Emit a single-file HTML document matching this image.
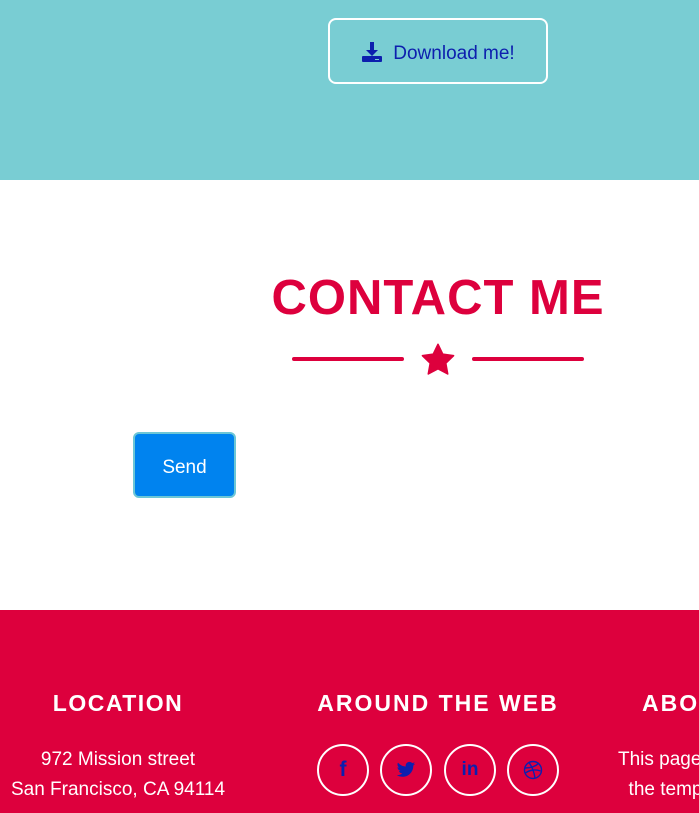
<!DOCTYPE html>
<html><head><meta charset="utf-8"><style>
*{margin:0;padding:0;box-sizing:border-box}
html,body{width:699px;height:813px;overflow:hidden}
body{position:relative;font-family:"Liberation Sans",sans-serif;background:#fff}
.wrap{position:absolute;left:0;top:0;width:699px;height:813px;overflow:hidden}
.a{position:absolute}
.top{left:0;top:0;width:699px;height:180px;background:#79cdd3}
.dl{left:328px;top:18px;width:220px;height:66px;border:2px solid #fff;border-radius:8px;color:#0d1fae;font-size:19px;display:flex;align-items:center;justify-content:center;gap:10px;padding-top:5px}
.h{left:238px;width:400px;text-align:center;color:#dd003d;font-weight:bold;font-size:49px;top:270px;letter-spacing:1px;white-space:nowrap}
.line{height:4px;background:#dd003d;border-radius:2px;top:357px;width:112px}
.send{left:133px;top:432px;width:103px;height:66px;background:#0083ef;border:2px solid #6cc6d6;border-radius:6px;color:#fff;font-size:19px;display:flex;align-items:center;justify-content:center;padding-top:5px}
.foot{left:0;top:610px;width:699px;height:203px;background:#dd003d;overflow:hidden}
.fh{color:#fff;font-weight:bold;font-size:23px;text-align:center;top:80px;white-space:nowrap}
.ft{color:#fff;font-size:19px;line-height:30px;text-align:center;white-space:nowrap}
.c{top:134px;width:52px;height:52px;border:2px solid #fff;border-radius:50%;display:flex;align-items:center;justify-content:center;color:#0d1fae;font-weight:bold;font-size:21px}
</style></head><body><div class="wrap">
<div class="a top"></div>
<div class="a dl"><svg width="22" height="22" viewBox="0 0 22 22" style="margin-top:-4px"><path d="M9 1h4v8h4l-6 6-6-6h4z" fill="#0d1fae"/><rect x="1" y="15" width="20" height="6" rx="1" fill="#0d1fae"/><rect x="14" y="18" width="4" height="1" fill="#79cdd3"/></svg><span>Download me!</span></div>
<div class="a h">CONTACT ME</div>
<div class="a line" style="left:292px"></div>
<div class="a line" style="left:472px"></div>
<svg class="a" style="left:420px;top:342px" width="36" height="36" viewBox="0 0 24 24"><path d="M12 1.5l3.2 6.6 7.2 1-5.2 5 1.3 7.2L12 17.9l-6.5 3.4 1.3-7.2-5.2-5 7.2-1z" fill="#dd003d" stroke="#dd003d" stroke-linejoin="round" stroke-width="1"/></svg>
<div class="a send">Send</div>
<div class="a foot">
<div class="a fh" style="left:0;width:236px;letter-spacing:1.5px">LOCATION</div>
<div class="a ft" style="left:0;width:236px;top:135px">972 Mission street<br>San Francisco, CA 94114</div>
<div class="a fh" style="left:288px;width:300px;letter-spacing:2px">AROUND THE WEB</div>
<div class="a c" style="left:317px">f</div>
<div class="a c" style="left:380px"><svg width="20" height="18" viewBox="0 0 24 20"><path d="M23 2.5c-.8.4-1.7.6-2.6.7.9-.6 1.6-1.4 2-2.5-.9.5-1.9.9-2.9 1.1C18.6.9 17.4.3 16.1.3c-2.5 0-4.5 2-4.5 4.5 0 .4 0 .7.1 1C7.9 5.6 4.6 3.8 2.4 1.1 2 1.8 1.8 2.6 1.8 3.4c0 1.6.8 2.9 2 3.7-.7 0-1.4-.2-2-.6v.1c0 2.2 1.6 4 3.6 4.4-.4.1-.8.2-1.2.2-.3 0-.6 0-.8-.1.6 1.8 2.2 3.1 4.2 3.1-1.5 1.2-3.5 1.9-5.6 1.9H1c2 1.3 4.4 2 6.9 2 8.3 0 12.8-6.9 12.8-12.8v-.6c.9-.6 1.6-1.4 2.3-2.2z" fill="#0d1fae"/></svg></div>
<div class="a c" style="left:444px;font-size:19px">in</div>
<div class="a c" style="left:507px"><svg width="20" height="20" viewBox="0 0 20 20" fill="none" stroke="#0d1fae" stroke-width="1.4"><circle cx="10" cy="10" r="8.5"/><path d="M6 2.5c3 4 5 9 6 15.5M2 8c5 0 10-1 14-5M2.5 13c4-3 10-4 15-2"/></svg></div>
<div class="a fh" style="left:642px;width:57px;text-align:left;letter-spacing:2px;overflow:hidden">ABOUT</div>
<div class="a ft" style="left:618px;width:81px;top:135px;text-align:left;overflow:hidden">This page is<br>&nbsp;&nbsp;the template</div>
</div>
</div></body></html>
